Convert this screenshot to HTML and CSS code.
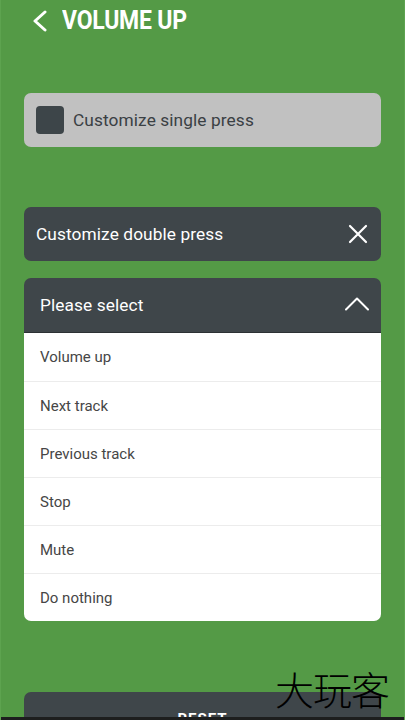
FILE: index.html
```html
<!DOCTYPE html>
<html lang="en">
<head>
<meta charset="utf-8">
<title>Volume up</title>
<link rel="stylesheet" href="styles.css">
</head>
<body>
<div class="screen">
  <header class="topbar">
    <svg class="back" width="16" height="22" viewBox="0 0 16 22"><path d="M13 2 L3 11 L13 20" fill="none" stroke="#fff" stroke-width="3" stroke-linecap="round" stroke-linejoin="round"/></svg>
    <h1 class="title">VOLUME UP</h1>
  </header>

  <main class="content">
    <div class="card card-light">
      <span class="checkbox"></span>
      <span class="card-label dark-text">Customize single press</span>
    </div>

    <div class="card card-dark double">
      <span class="card-label">Customize double press</span>
      <svg class="icon-x" width="20" height="20" viewBox="0 0 20 20"><path d="M2 2 L18 18 M18 2 L2 18" stroke="#fff" stroke-width="2.2" stroke-linecap="round"/></svg>
    </div>

    <div class="select-wrap">
      <div class="card card-dark select">
        <span class="card-label select-label">Please select</span>
        <svg class="icon-up" width="24" height="14" viewBox="0 0 24 14"><path d="M1 12.5 L12 1.5 L23 12.5" fill="none" stroke="#fff" stroke-width="2" stroke-linecap="round" stroke-linejoin="round"/></svg>
      </div>
      <ul class="options">
        <li>Volume up</li>
        <li>Next track</li>
        <li>Previous track</li>
        <li>Stop</li>
        <li>Mute</li>
        <li>Do nothing</li>
      </ul>
    </div>

    <button class="reset">RESET</button>
  </main>

  <div class="watermark">大玩客</div>
  <div class="navbar"></div>
</div>
</body>
</html>
```
FILE: styles.css
```css
* { box-sizing: border-box; }
html, body {
  margin: 0;
  padding: 0;
}
body {
  width: 405px;
  height: 720px;
  overflow: hidden;
  background: #549a46;
  font-family: Roboto, "Noto Sans", "Liberation Sans", sans-serif;
}
.screen {
  position: relative;
  width: 405px;
  height: 720px;
  overflow: hidden;
  background: #549a46;
  border-left: 1px solid #5da34f;
  border-right: 1px solid #5da34f;
}
.topbar {
  height: 42px;
  display: flex;
  align-items: center;
  padding-left: 31px;
}
.back {
  display: block;
}
.title {
  margin: 0 0 0 14px;
  color: #fff;
  font-family: Roboto, "Liberation Sans", sans-serif;
  font-weight: 700;
  font-size: 25.5px;
  letter-spacing: -0.2px;
  transform: scaleX(0.9);
  transform-origin: left center;
  line-height: 1;
}
.content {
  padding: 51px 23px 0 23px;
  display: flex;
  flex-direction: column;
}
.card {
  height: 54px;
  border-radius: 7px;
  display: flex;
  align-items: center;
  padding: 0 12px;
}
.card-light {
  background: #c1c1c1;
}
.card-dark {
  background: #3f464a;
}
.checkbox {
  width: 28px;
  height: 28px;
  background: #3d4549;
  border-radius: 4px;
  margin-right: 9px;
  flex: none;
}
.card-label {
  font-size: 17.3px;
  color: #fff;
  letter-spacing: 0.1px;
}
.dark-text {
  color: #3a4044;
}
.double {
  margin-top: 60px;
  justify-content: space-between;
  padding-right: 13px;
}
.select-wrap {
  margin-top: 17px;
}
.select {
  justify-content: space-between;
  padding-left: 16px;
  padding-right: 12px;
  border-radius: 7px 7px 0 0;
  border-bottom: 1px solid #2c3134;
  height: 55px;
}
.icon-up {
  margin-top: -2px;
}
.options {
  list-style: none;
  margin: 0;
  padding: 0;
  background: #fff;
  border-radius: 0 0 7px 7px;
}
.options li {
  height: 48px;
  display: flex;
  align-items: center;
  padding-left: 16px;
  font-size: 15px;
  color: #464646;
  border-top: 1px solid #ececec;
}
.options li:first-child {
  border-top: none;
}
.reset {
  margin-top: 71px;
  height: 48px;
  border: none;
  border-radius: 7px;
  background: #3f464a;
  color: #fff;
  font-family: Roboto, "Liberation Sans", sans-serif;
  font-weight: 700;
  font-size: 15px;
  letter-spacing: 1px;
  padding: 18px 0 0;
  display: flex;
  justify-content: center;
  align-items: flex-start;
}
.watermark {
  position: absolute;
  left: 274px;
  top: 665px;
  font-family: "Noto Sans CJK SC", sans-serif;
  font-weight: 300;
  font-size: 39px;
  line-height: 1.2;
  color: #000;
  letter-spacing: -1px;
}
.navbar {
  position: absolute;
  left: 0;
  right: 0;
  bottom: 0;
  height: 3px;
  background: #1d1e1e;
}
```
